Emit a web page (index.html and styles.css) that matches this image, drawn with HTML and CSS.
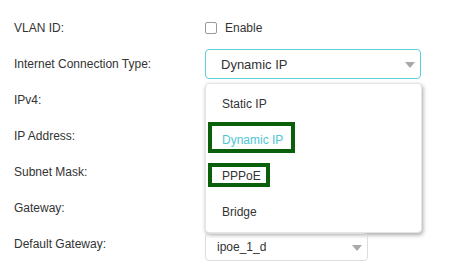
FILE: index.html
```html
<!DOCTYPE html>
<html>
    <head>
        <title>Internet</title>
        <meta charset="UTF-8">
        <link rel="stylesheet" href="styles.css">
    </head>
    <body>
        <div class="form">
            <div class="row">
                <div class="label">VLAN ID:</div>
                <div class="field">
                    <label class="check"><span class="box"></span>Enable</label>
                </div>
            </div>
            <div class="row">
                <div class="label">Internet Connection Type:</div>
                <div class="field">
                    <div class="select active">
                        <span>Dynamic IP</span>
                        <span class="arrow"></span>
                        <ul class="options">
                            <li>Static IP</li>
                            <li class="selected">Dynamic IP</li>
                            <li>PPPoE</li>
                            <li>Bridge</li>
                            <span class="mark mark-dynamic"></span>
                            <span class="mark mark-pppoe"></span>
                        </ul>
                    </div>
                </div>
            </div>
            <div class="row">
                <div class="label">IPv4:</div>
            </div>
            <div class="row">
                <div class="label">IP Address:</div>
            </div>
            <div class="row">
                <div class="label">Subnet Mask:</div>
            </div>
            <div class="row">
                <div class="label">Gateway:</div>
            </div>
            <div class="row">
                <div class="label">Default Gateway:</div>
                <div class="field">
                    <div class="select small">
                        <span>ipoe_1_d</span>
                        <span class="arrow"></span>
                    </div>
                </div>
            </div>
        </div>
    </body>
</html>
```
FILE: styles.css
```css
body {
    margin: 0;
    background: #fff;
    font-family: "Liberation Sans", Arial, sans-serif;
    font-size: 12px;
    color: #333;
}
.form {
    padding: 10px 0 0 14px;
}
.row {
    display: grid;
    grid-template-columns: 191px 1fr;
    height: 36px;
    align-items: center;
}
.field {
    display: flex;
    align-items: center;
}
.check {
    display: flex;
    align-items: center;
    gap: 8px;
}
.box {
    width: 10px;
    height: 10px;
    border: 1px solid #999;
    border-radius: 2px;
}
.select {
    position: relative;
    display: flex;
    align-items: center;
    justify-content: space-between;
    box-sizing: border-box;
    width: 216px;
    height: 30px;
    padding: 0 5px 0 15px;
    border: 1px solid #ddd;
    border-radius: 4px;
    font-size: 13px;
}
.select.active {
    border-color: #5fcfd9;
}
.select.small {
    width: 163px;
    height: 28px;
    margin-top: 6px;
    padding-left: 11px;
    font-size: 12px;
}
.arrow {
    width: 0;
    height: 0;
    border-left: 5px solid transparent;
    border-right: 5px solid transparent;
    border-top: 6px solid #a9a9a9;
    margin-top: 1px;
}
.options {
    position: absolute;
    top: 33px;
    left: -1px;
    width: 217px;
    margin: 0;
    padding: 2px 0;
    list-style: none;
    background: #fff;
    border: 1px solid #e4e4e4;
    border-radius: 4px;
    box-sizing: border-box;
    box-shadow: 1px 2px 4px rgba(0, 0, 0, 0.35);
    font-size: 12px;
}
.options li {
    height: 36px;
    line-height: 36px;
    padding-left: 16px;
}
.options li.selected {
    color: #4fc6d3;
}
.mark {
    position: absolute;
    border: 4px solid #0a5f0a;
}
.mark-dynamic {
    left: 2px;
    top: 38px;
    width: 79px;
    height: 23px;
}
.mark-pppoe {
    left: 2px;
    top: 79px;
    width: 54px;
    height: 16px;
}
```
